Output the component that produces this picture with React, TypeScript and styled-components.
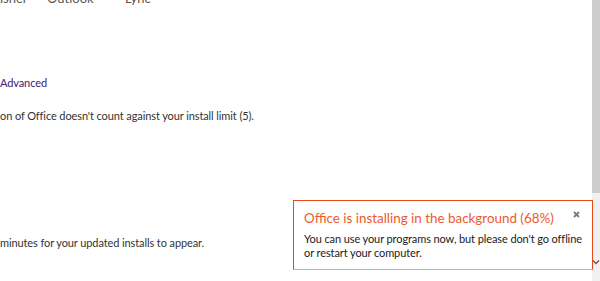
import React from 'react';
import { styled, createGlobalStyle } from 'styled-components';

const GlobalStyle = createGlobalStyle`
  html, body {
    margin: 0;
    padding: 0;
    background: #ffffff;
  }
  body {
    font-family: Lato, 'Noto Sans', sans-serif;
    overflow: hidden;
  }
`;

const Page = styled.div`
  position: relative;
  width: 600px;
  height: 281px;
  display: flex;
  overflow: hidden;
`;

const Content = styled.div`
  flex: 1;
  display: flex;
  flex-direction: column;
  color: #333333;
`;

const AppRow = styled.div`
  display: flex;
  margin-top: -10px;
  height: 16px;
  font-size: 13px;
  line-height: 16px;
  color: #555555;
`;

const AppName = styled.span<{ $w: number }>`
  width: ${({ $w }) => $w}px;
  white-space: nowrap;
`;

const Link = styled.a`
  margin-top: 69px;
  font-size: 11px;
  letter-spacing: -0.1px;
  color: #3a1a72;
  text-decoration: none;
  line-height: 16px;
`;

const Text = styled.p<{ $top: number }>`
  margin: ${({ $top }) => $top}px 0 0;
  font-size: 11px;
  letter-spacing: -0.1px;
  line-height: 16px;
  color: #333333;
  white-space: nowrap;
`;

const Scrollbar = styled.div`
  width: 8px;
  display: flex;
  flex-direction: column;
  background: #f0f0f0;
`;

const Thumb = styled.div`
  height: 193px;
  background: #cdcdcd;
`;

const Arrow = styled.div`
  margin-top: auto;
  margin-bottom: 14px;
  height: 8px;
  display: flex;
  justify-content: center;
`;

const Toast = styled.div`
  position: absolute;
  left: 293px;
  top: 200px;
  width: 298px;
  height: 68px;
  background: #ffffff;
  border: 1px solid #e8481a;
  border-bottom-color: #f4a38a;
`;

const ToastInner = styled.div`
  padding: 8px 10px 0 10px;
  position: relative;
`;

const Title = styled.div`
  font-size: 13.4px;
  line-height: 18px;
  color: #ec5a2c;
  white-space: nowrap;
`;

const Body = styled.div`
  margin-top: 5px;
  font-size: 11px;
  letter-spacing: -0.1px;
  line-height: 14px;
  color: #1a1a1a;
  white-space: nowrap;
`;

const Close = styled.button`
  position: absolute;
  top: 10px;
  right: 12px;
  width: 7px;
  height: 7px;
  padding: 0;
  border: none;
  background: none;
  display: flex;
`;

export default function App() {
  return (
    <>
      <GlobalStyle />
      <Page>
        <Content>
          <AppRow>
            <AppName $w={47}>isher</AppName>
            <AppName $w={78}>Outlook</AppName>
            <AppName $w={60}>Lync</AppName>
          </AppRow>
          <Link href="#">Advanced</Link>
          <Text $top={17}>on of Office doesn&apos;t count against your install limit (5).</Text>
          <Text $top={111}>minutes for your updated installs to appear.</Text>
        </Content>
        <Scrollbar>
          <Thumb />
          <Arrow>
            <svg width="8" height="6" viewBox="0 0 8 6">
              <path d="M1 1.5 L4 4.5 L7 1.5" fill="none" stroke="#606060" strokeWidth="1.4" />
            </svg>
          </Arrow>
        </Scrollbar>
        <Toast>
          <ToastInner>
            <Title>Office is installing in the background (68%)</Title>
            <Body>
              You can use your programs now, but please don&apos;t go offline
              <br />
              or restart your computer.
            </Body>
            <Close aria-label="Close">
              <svg width="7" height="7" viewBox="0 0 7 7">
                <path d="M1 1 L6 6 M6 1 L1 6" stroke="#7a7a7a" strokeWidth="1.8" />
              </svg>
            </Close>
          </ToastInner>
        </Toast>
      </Page>
    </>
  );
}
